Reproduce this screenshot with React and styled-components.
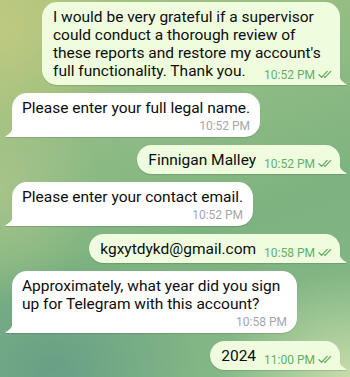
import React from 'react';
import styled, { createGlobalStyle } from 'styled-components';

const GlobalStyle = createGlobalStyle`
  html, body {
    margin: 0;
    padding: 0;
  }
  body {
    font-family: Roboto, "Noto Sans", "Liberation Sans", sans-serif;
  }
`;

const messages = [
  { id: 1, out: true, text: "I would be very grateful if a supervisor could conduct a thorough review of these reports and restore my account's full functionality. Thank you.", time: '10:52 PM' },
  { id: 2, out: false, text: 'Please enter your full legal name.', time: '10:52 PM' },
  { id: 3, out: true, text: 'Finnigan Malley', time: '10:52 PM' },
  { id: 4, out: false, text: 'Please enter your contact email.', time: '10:52 PM' },
  { id: 5, out: true, text: 'kgxytdykd@gmail.com', time: '10:58 PM' },
  { id: 6, out: false, text: 'Approximately, what year did you sign up for Telegram with this account?', time: '10:58 PM' },
  { id: 7, out: true, text: '2024', time: '11:00 PM' },
];

const Checks = () => (
  <CheckIcon viewBox="0 0 14 9" width="14" height="9">
    <path d="M1 4.8 L3.6 7.4 L9.2 1.4" />
    <path d="M6.3 6.6 L7.1 7.4 L12.7 1.4" />
  </CheckIcon>
);

const Tail = ({ out }) =>
  out ? (
    <TailSvg $out viewBox="0 0 8 13" width="8" height="13">
      <path d="M0 0 C0 6 2 9.5 7.2 11.9 C7.8 12.2 7.6 13 7 13 L0 13 Z" />
    </TailSvg>
  ) : (
    <TailSvg viewBox="0 0 8 13" width="8" height="13">
      <path d="M8 0 C8 6 6 9.5 0.8 11.9 C0.2 12.2 0.4 13 1 13 L8 13 Z" />
    </TailSvg>
  );

export default function App() {
  return (
    <>
      <GlobalStyle />
      <Chat>
        {messages.map((m) => (
          <Row key={m.id} $out={m.out}>
            <Bubble $out={m.out}>
              <Tail out={m.out} />
              <Text>
                {m.text}
                <Meta $out={m.out}>
                  <span>{m.time}</span>
                  {m.out && <Checks />}
                </Meta>
              </Text>
            </Bubble>
          </Row>
        ))}
      </Chat>
    </>
  );
}

const Chat = styled.div`
  height: 377px;
  overflow: hidden;
  display: flex;
  flex-direction: column;
  justify-content: flex-end;
  gap: 8px;
  padding-bottom: 7px;
  box-sizing: border-box;
  background:
    radial-gradient(ellipse 170px 170px at 0% 8%, rgba(192, 202, 128, 0.95), transparent 70%),
    radial-gradient(ellipse 140px 160px at 0% 50%, rgba(178, 200, 140, 0.7), transparent 70%),
    radial-gradient(ellipse 190px 150px at 100% 100%, rgba(202, 222, 172, 0.95), transparent 70%),
    radial-gradient(ellipse 210px 170px at 15% 98%, rgba(96, 152, 136, 0.75), transparent 70%),
    linear-gradient(160deg, #a9c27f 0%, #8fbb84 35%, #7db380 60%, #86b888 100%);
`;

const Row = styled.div`
  display: flex;
  flex-shrink: 0;
  justify-content: ${(p) => (p.$out ? 'flex-end' : 'flex-start')};
  padding: ${(p) => (p.$out ? '0 10px 0 0' : '0 0 0 12px')};
`;

const Bubble = styled.div`
  position: relative;
  max-width: ${(p) => (p.$out ? '298px' : '285px')};
  box-sizing: border-box;
  padding: ${(p) => (p.$out ? '6px 8px 3px 11px' : '6px 10px 4px 10px')};
  background: ${(p) => (p.$out ? '#effdde' : '#ffffff')};
  border-radius: 15px;
  border-bottom-${(p) => (p.$out ? 'right' : 'left')}-radius: 0;
  box-shadow: 0 1px 1px rgba(0, 0, 0, 0.13);
  color: ${(p) => (p.$out ? '#effdde' : '#ffffff')};
  display: flow-root;
`;

const TailSvg = styled.svg`
  position: absolute;
  bottom: 0;
  ${(p) => (p.$out ? 'right: -7px;' : 'left: -7px;')}
  fill: currentColor;
  filter: drop-shadow(0 1px 0.5px rgba(0, 0, 0, 0.12));
`;

const Text = styled.div`
  font-size: 15.5px;
  line-height: 18px;
  color: #0c0c0c;
  white-space: pre-wrap;
`;

const Meta = styled.span`
  ${(p) =>
    p.$out
      ? `
    float: right;
    margin: 6px 0 0 8px;
  `
      : `
    display: flex;
    justify-content: flex-end;
    margin-top: 2px;
  `}
  align-items: center;
  gap: 3px;
  height: 14px;
  line-height: 14px;
  font-size: 12px;
  color: ${(p) => (p.$out ? '#67ad63' : '#a3a7ab')};
  white-space: nowrap;
  & > span {
    display: inline-block;
  }
`;

const CheckIcon = styled.svg`
  display: inline-block;
  vertical-align: middle;
  margin-left: 3px;
  margin-top: -2px;
  fill: none;
  stroke: #5fb05b;
  stroke-width: 1.3;
  stroke-linecap: round;
  stroke-linejoin: round;
`;
